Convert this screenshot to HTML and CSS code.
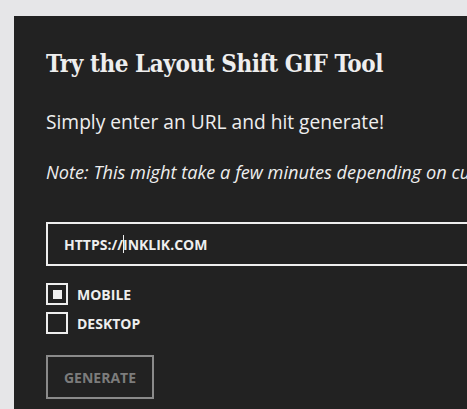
FILE: index.html
```html
<!DOCTYPE html>
<html>
<head>
<meta charset="utf-8">
<link rel="stylesheet" href="styles.css">
</head>
<body>
<main class="panel">
  <h2 class="title">Try the Layout Shift GIF Tool</h2>
  <p class="lead">Simply enter an URL and hit generate!</p>
  <p class="note">Note: This might take a few minutes depending on current load.</p>
  <form class="form">
    <div class="field"><span class="url">HTTPS://</span><span class="caret"></span><span class="url">INKLIK.COM</span></div>
    <div class="options">
      <label class="opt"><span class="box checked"></span><span class="opt-label">MOBILE</span></label>
      <label class="opt"><span class="box"></span><span class="opt-label">DESKTOP</span></label>
    </div>
    <div class="actions"><span class="btn">GENERATE</span></div>
  </form>
</main>
</body>
</html>
```
FILE: styles.css
```css
html, body { margin: 0; padding: 0; }
body {
  background: #e6e6e8;
  width: 467px;
  height: 409px;
  overflow: hidden;
  font-family: "Open Sans", sans-serif;
}
.panel {
  margin: 16px 0 0 14px;
  background: #222222;
  color: #eeeeee;
  padding: 33px 0 0 32px;
  width: 453px;
  height: 393px;
  box-sizing: border-box;
  white-space: nowrap;
  overflow: hidden;
}
.title {
  font-family: "DejaVu Serif Condensed", "DejaVu Serif", serif;
  font-weight: 900;
  font-size: 24px;
  line-height: 30px;
  margin: 0;
  letter-spacing: -0.45px;
}
.lead {
  font-size: 19.2px;
  line-height: 28px;
  margin: 29px 0 0;
}
.note {
  font-style: italic;
  font-size: 18.2px;
  line-height: 28px;
  margin: 22px 0 0;
}
.form { margin-top: 36px; }
.field {
  width: 520px;
  height: 44px;
  box-sizing: border-box;
  border: 2px solid #eeeeee;
  display: flex;
  align-items: center;
  padding-left: 16px;
}
.url { font-weight: bold; font-size: 14px; color: #eeeeee; }
.caret { width: 1px; height: 18px; background: #eeeeee; margin: 0 -1px 0 0; }
.options {
  margin-top: 17px;
  display: flex;
  flex-direction: column;
  gap: 7px;
}
.opt { display: flex; align-items: center; gap: 9px; }
.box {
  width: 22px;
  height: 22px;
  box-sizing: border-box;
  border: 2px solid #eeeeee;
  display: flex;
  align-items: center;
  justify-content: center;
}
.box.checked::after {
  content: "";
  width: 9px;
  height: 9px;
  background: #eeeeee;
}
.opt-label { font-weight: bold; font-size: 14px; }
.actions { margin-top: 21px; }
.btn {
  display: inline-flex;
  align-items: center;
  justify-content: center;
  width: 108px;
  height: 44px;
  box-sizing: border-box;
  border: 2px solid #8a8a8a;
  color: #7c7c7c;
  font-weight: bold;
  font-size: 14px;
}
```
